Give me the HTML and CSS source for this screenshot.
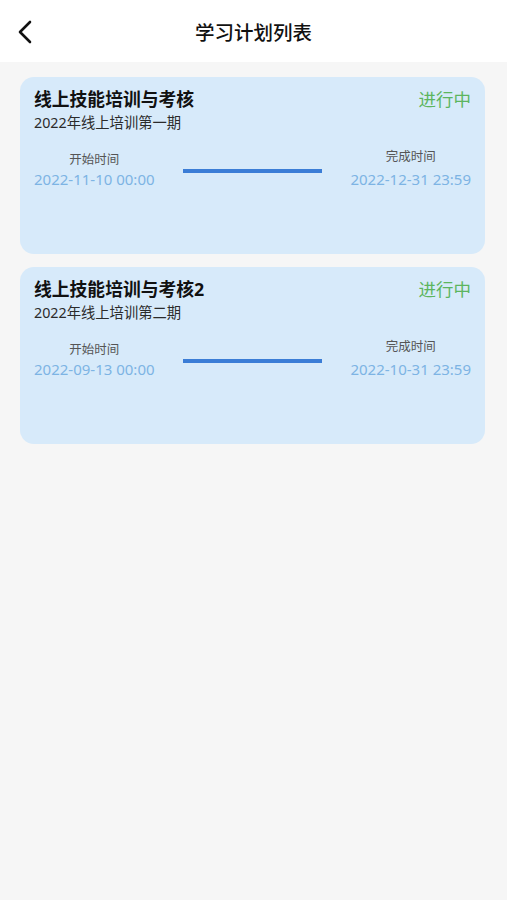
FILE: index.html
```html
<!DOCTYPE html>
<html lang="zh-CN">
<head>
    <meta charset="UTF-8">
    <meta name="viewport" content="width=device-width, initial-scale=1.0">
    <title>学习计划列表</title>
    <link rel="stylesheet" href="styles.css">
</head>
<body>
    <div class="navbar">
        <span class="back">
            <svg width="16" height="24" viewBox="0 0 16 24">
                <path d="M13 2 L3 12 L13 22" fill="none" stroke="#111" stroke-width="2.6" stroke-linecap="round" stroke-linejoin="round"/>
            </svg>
        </span>
        <h1>学习计划列表</h1>
    </div>

    <div class="list">
        <div class="card">
            <div class="card-head">
                <div class="card-title">线上技能培训与考核</div>
                <div class="status">进行中</div>
            </div>
            <div class="card-sub">2022年线上培训第一期</div>
            <div class="period">
                <div class="time">
                    <div class="label">开始时间</div>
                    <div class="date">2022-11-10 00:00</div>
                </div>
                <div class="bar"></div>
                <div class="time end">
                    <div class="label">完成时间</div>
                    <div class="date">2022-12-31 23:59</div>
                </div>
            </div>
        </div>

        <div class="card">
            <div class="card-head">
                <div class="card-title">线上技能培训与考核2</div>
                <div class="status">进行中</div>
            </div>
            <div class="card-sub">2022年线上培训第二期</div>
            <div class="period">
                <div class="time">
                    <div class="label">开始时间</div>
                    <div class="date">2022-09-13 00:00</div>
                </div>
                <div class="bar"></div>
                <div class="time end">
                    <div class="label">完成时间</div>
                    <div class="date">2022-10-31 23:59</div>
                </div>
            </div>
        </div>
    </div>
</body>
</html>
```

FILE: styles.css
```css
body {
    margin: 0;
    padding: 0;
    min-height: 100vh;
    background: #f6f6f6;
    color: #111;
    font-family: "Noto Sans", "Noto Sans CJK SC", sans-serif;
}
.navbar {
    height: 62px;
    background: #fff;
    display: flex;
    align-items: center;
    justify-content: center;
    position: relative;
}
.navbar h1 {
    margin: 0;
    font-size: 19.5px;
    font-weight: 500;
    color: #111;
}
.back {
    position: absolute;
    left: 17px;
    top: 20px;
    display: flex;
}
.list {
    padding: 15px 22px 0 20px;
    display: flex;
    flex-direction: column;
    gap: 13px;
}
.card {
    background: #d7eafa;
    border-radius: 14px;
    height: 177px;
    box-sizing: border-box;
    padding: 9px 14px 0 14px;
}
.card-head {
    display: flex;
    justify-content: space-between;
    align-items: center;
}
.card-title {
    font-size: 17.8px;
    font-weight: 700;
    line-height: 26px;
    color: #111;
}
.status {
    font-size: 17.5px;
    line-height: 26px;
    color: #5db55f;
}
.card-sub {
    font-size: 14.3px;
    line-height: 20px;
    color: #2b2b2b;
    margin-top: 1px;
}
.period {
    display: flex;
    align-items: center;
    gap: 28px;
    margin-top: 18px;
}
.time {
    text-align: center;
}
.label {
    font-size: 12.5px;
    line-height: 18px;
    color: #555;
}
.end .label {
    margin-top: -3px;
    margin-bottom: 3px;
}
.date {
    font-size: 15px;
    line-height: 21px;
    color: #7db4e4;
}
.bar {
    flex: 1;
    height: 4px;
    background: #3b7dd6;
}
```
